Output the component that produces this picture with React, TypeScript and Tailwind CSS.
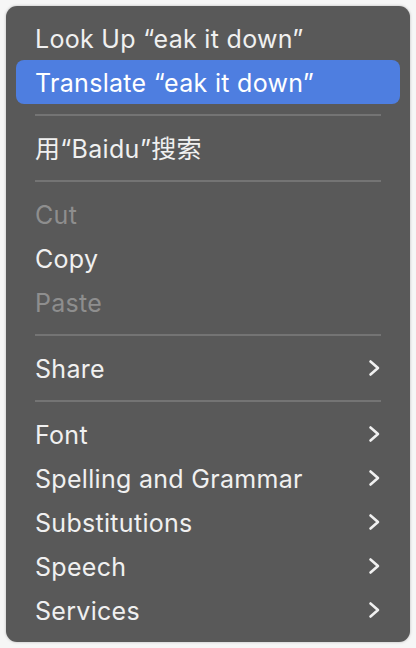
type Item =
  | { kind: "item"; label: string; disabled?: boolean; active?: boolean; sub?: boolean }
  | { kind: "sep" };

const items: Item[] = [
  { kind: "item", label: "Look Up \u201Ceak it down\u201D" },
  { kind: "item", label: "Translate \u201Ceak it down\u201D", active: true },
  { kind: "sep" },
  { kind: "item", label: "用\u201CBaidu\u201D搜索" },
  { kind: "sep" },
  { kind: "item", label: "Cut", disabled: true },
  { kind: "item", label: "Copy" },
  { kind: "item", label: "Paste", disabled: true },
  { kind: "sep" },
  { kind: "item", label: "Share", sub: true },
  { kind: "sep" },
  { kind: "item", label: "Font", sub: true },
  { kind: "item", label: "Spelling and Grammar", sub: true },
  { kind: "item", label: "Substitutions", sub: true },
  { kind: "item", label: "Speech", sub: true },
  { kind: "item", label: "Services", sub: true },
];

function Chevron() {
  return (
    <svg width="12" height="18" viewBox="0 0 12 18" fill="none" className="text-[#f0f0f0]">
      <polyline points="2.5,2.5 10,9 2.5,15.5" stroke="currentColor" strokeWidth="2.6" strokeLinecap="round" strokeLinejoin="round" />
    </svg>
  );
}

function Row({ item }: { item: Extract<Item, { kind: "item" }> }) {
  return (
    <div
      className={
        "mx-[10px] flex h-[44px] items-center justify-between rounded-[8px] pl-[19px] pr-[20px] " +
        (item.active ? "bg-[#4e7ee0] text-white" : item.disabled ? "text-[#8e8e8e]" : "text-[#f0f0f0]")
      }
    >
      <span className="whitespace-nowrap pt-[2px]">{item.label}</span>
      {item.sub && <Chevron />}
    </div>
  );
}

export default function App() {
  return (
    <div className="h-[648px] w-[416px] bg-[#f6f6f6] p-[6px]">
      <div
        className="flex h-[636px] w-[404px] flex-col rounded-[11px] bg-[#595959] py-[10px] text-[25px] leading-none tracking-[0.3px] shadow-[0_0_3px_rgba(0,0,0,0.25)]"
        style={{ fontFamily: "Inter, 'Noto Sans CJK SC', sans-serif" }}
      >
        {items.map((it, i) =>
          it.kind === "sep" ? (
            <div key={i} className="flex h-[22px] items-center px-[29px]">
              <div className="h-[2px] w-full bg-[#747474]" />
            </div>
          ) : (
            <Row key={i} item={it} />
          )
        )}
      </div>
    </div>
  );
}
